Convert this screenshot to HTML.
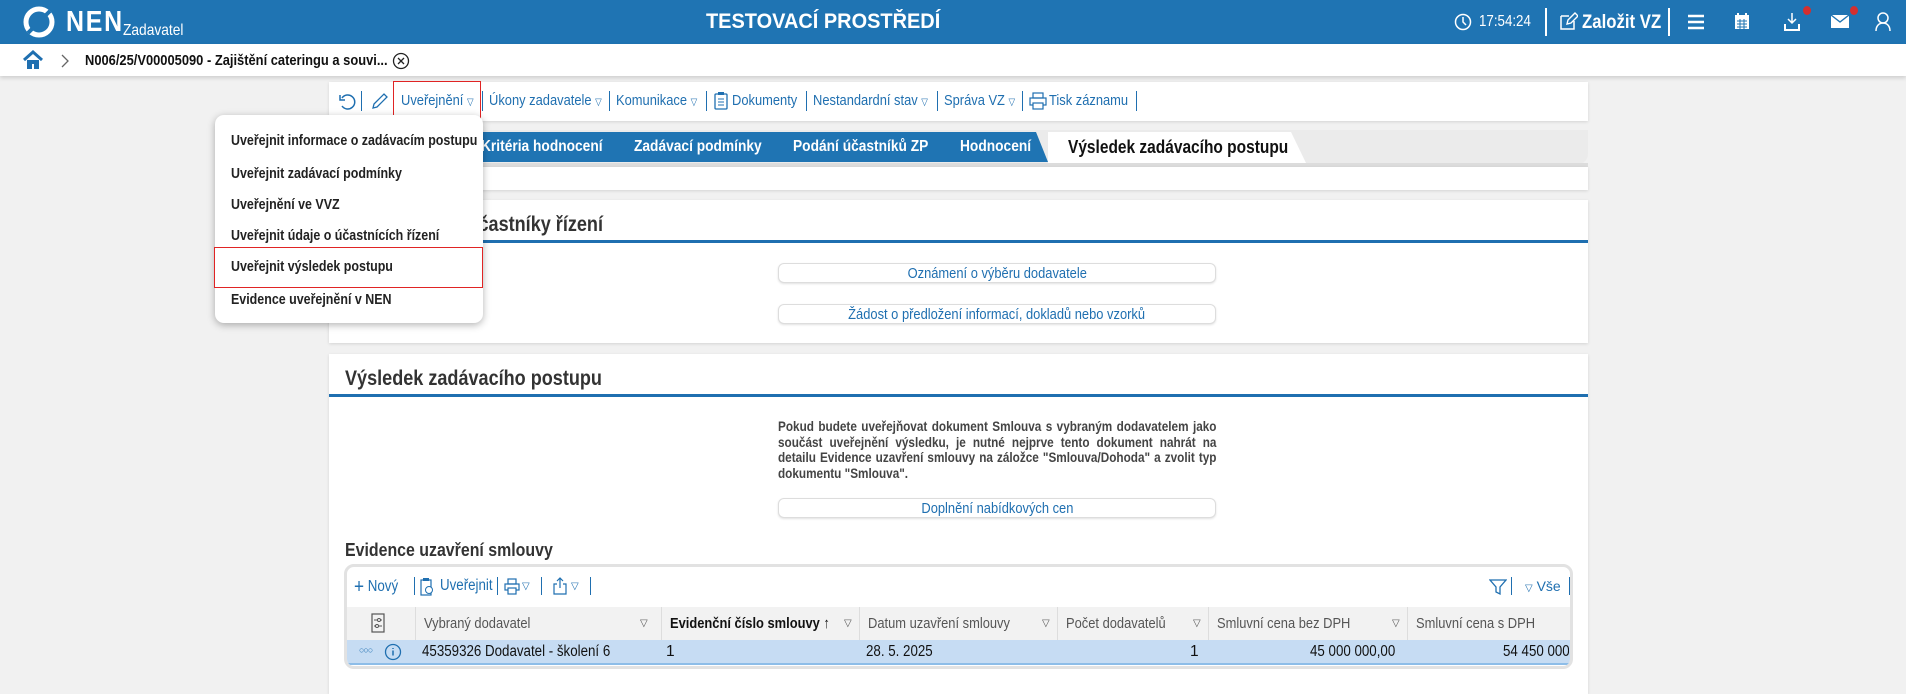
<!DOCTYPE html>
<html><head><meta charset="utf-8">
<style>
*{box-sizing:border-box;margin:0;padding:0}
body{width:1906px;height:680px;overflow:hidden;background:#f1f1f1;font-family:"Liberation Sans",sans-serif;position:relative;color:#222}
.a{position:absolute;white-space:nowrap}
.c{transform:scaleX(.86);transform-origin:0 50%}
.ci{display:inline-block;transform:scaleX(.86);transform-origin:0 50%}
.top{left:0;top:0;width:1906px;height:44px;background:#1f74b3}
.crumb{left:0;top:44px;width:1906px;height:32px;background:#fff;box-shadow:0 2px 4px rgba(0,0,0,.15)}
.tb{color:#1f6fb0;font-size:15px;top:92px}
.sep{width:1px;height:20px;background:#1f6fb0;top:91px}
.tab{top:132px;height:30px;background:#1f74b3;color:#fff;font-weight:bold;font-size:16px;line-height:30px;clip-path:polygon(0 0,calc(100% - 12px) 0,100% 100%,0 100%)}
.panel{background:#fff;box-shadow:0 1px 3px rgba(0,0,0,.12)}
.h2{font-size:21px;font-weight:bold;color:#333}
.bl{height:3px;background:#1f6fb0}
.btn{border:1px solid #ddd;border-radius:6px;background:#fff;box-shadow:0 1px 2px rgba(0,0,0,.12);color:#1f6fb0;font-size:15px;text-align:center;line-height:19px}
.mi{left:231px;font-size:15px;font-weight:bold;color:#222;transform:scaleX(.83);transform-origin:0 50%}
.th{top:607px;height:33px;background:#f2f2f2;border-right:1px solid #ddd;color:#555;font-size:15px;line-height:33px;padding-left:8px}
.td{top:640px;height:24px;font-size:15.5px;line-height:24px;color:#111}
.ar{font-size:10px;color:#555}
</style></head><body>
<div class="a top"></div>
<svg class="a" style="left:22px;top:6px" width="36" height="32" viewBox="0 0 36 32"><circle cx="17" cy="16" r="13" fill="none" stroke="#fff" stroke-width="5"/><path d="M6 27 L28 5" stroke="#1f74b3" stroke-width="4"/></svg>
<div class="a c" style="left:66px;top:6px;color:#fff;font-size:29px;font-weight:bold;letter-spacing:2px">NEN</div>
<div class="a c" style="left:123px;top:22px;color:#fff;font-size:16px">Zadavatel</div>
<div class="a" style="left:706px;top:10px;color:#fff;font-size:21px;font-weight:bold;transform:scaleX(.95);transform-origin:0 50%">TESTOVACÍ PROSTŘEDÍ</div>
<svg class="a" style="left:1454px;top:13px" width="18" height="18"><circle cx="9" cy="9" r="7.5" fill="none" stroke="#fff" stroke-width="1.5"/><path d="M9 4v5l3 3" stroke="#fff" stroke-width="1.5" fill="none"/></svg>
<div class="a c" style="left:1479px;top:13px;color:#fff;font-size:15.5px">17:54:24</div>
<div class="a" style="left:1545px;top:8px;width:2px;height:28px;background:#fff"></div>
<svg class="a" style="left:1558px;top:11px" width="20" height="20"><path d="M3 5h8M3 5v13h13v-8" stroke="#fff" stroke-width="1.5" fill="none"/><path d="M9 13l1-4 7-7 3 3-7 7z" stroke="#fff" stroke-width="1.4" fill="none"/></svg>
<div class="a c" style="left:1582px;top:11px;color:#fff;font-size:19.5px;font-weight:bold">Založit VZ</div>
<div class="a" style="left:1668px;top:8px;width:2px;height:28px;background:#fff"></div>
<svg class="a" style="left:1686px;top:13px" width="20" height="18"><path d="M2 3h16M2 9h16M2 15h16" stroke="#fff" stroke-width="2.4"/></svg>
<svg class="a" style="left:1733px;top:11px" width="18" height="20"><rect x="2" y="4" width="14" height="14" fill="#fff"/><path d="M5 2v4M13 2v4" stroke="#fff" stroke-width="2"/><path d="M4 10h10M4 13h10M4 16h10M7 8v10M11 8v10" stroke="#1f74b3" stroke-width="1"/></svg>
<svg class="a" style="left:1782px;top:11px" width="22" height="22"><path d="M10 2v10M6 8l4 4 4-4" stroke="#fff" stroke-width="1.5" fill="none"/><path d="M3 13v6h14v-6" stroke="#fff" stroke-width="2" fill="none"/></svg>
<div class="a" style="left:1803px;top:6px;width:8px;height:9px;border-radius:50%;background:#d32f2f"></div>
<svg class="a" style="left:1830px;top:14px" width="22" height="16"><rect x="1" y="1" width="18" height="13" fill="#fff"/><path d="M1 1l9 7 9-7" stroke="#1f74b3" stroke-width="1.4" fill="none"/></svg>
<div class="a" style="left:1850px;top:6px;width:8px;height:9px;border-radius:50%;background:#d32f2f"></div>
<svg class="a" style="left:1874px;top:11px" width="18" height="22"><circle cx="9" cy="7" r="5" fill="none" stroke="#fff" stroke-width="1.5"/><path d="M2 20c0-5 3-8 7-8s7 3 7 8" stroke="#fff" stroke-width="1.5" fill="none"/></svg>

<div class="a crumb"></div>
<svg class="a" style="left:22px;top:50px" width="22" height="20"><path d="M2 10L11 2l9 8" stroke="#1f6fb0" stroke-width="3" fill="none"/><path d="M5 10v9h5v-5h2v5h5v-9" fill="#1f6fb0"/></svg>
<svg class="a" style="left:60px;top:54px" width="10" height="14"><path d="M2 1l6 6-6 6" stroke="#666" stroke-width="1.3" fill="none"/></svg>
<div class="a c" style="left:85px;top:52px;font-size:15px;font-weight:bold;color:#111">N006/25/V00005090 - Zajištění cateringu a souvi...</div>
<svg class="a" style="left:392px;top:52px" width="18" height="18"><circle cx="9" cy="9" r="7.5" fill="none" stroke="#222" stroke-width="1.3"/><path d="M6 6l6 6M12 6l-6 6" stroke="#222" stroke-width="1.3"/></svg>

<!-- toolbar -->
<div class="a panel" style="left:329px;top:82px;width:1259px;height:39px"></div>
<svg class="a" style="left:338px;top:92px" width="18" height="20"><path d="M4 6a7 7 0 1 1 0 8" stroke="#1f6fb0" stroke-width="1.5" fill="none"/><path d="M2 3v5h5" stroke="#1f6fb0" stroke-width="1.5" fill="none"/></svg>
<div class="a sep" style="left:361px"></div>
<svg class="a" style="left:369px;top:91px" width="20" height="20"><path d="M4 17l1-4L15 3l3 3L8 16z" stroke="#1f6fb0" stroke-width="1.3" fill="none"/></svg>
<div class="a" style="left:393px;top:81px;width:88px;height:41px;border:1px solid #e02424"></div>
<div class="a tb c" style="left:401px">Uveřejnění <span class="ar" style="color:#1f6fb0">▽</span></div>
<div class="a sep" style="left:482px"></div>
<div class="a tb c" style="left:489px">Úkony zadavatele <span class="ar" style="color:#1f6fb0">▽</span></div>
<div class="a sep" style="left:609px"></div>
<div class="a tb c" style="left:616px">Komunikace <span class="ar" style="color:#1f6fb0">▽</span></div>
<div class="a sep" style="left:706px"></div>
<svg class="a" style="left:713px;top:91px" width="16" height="20"><rect x="2" y="3" width="12" height="15" rx="1" fill="none" stroke="#1f6fb0" stroke-width="1.3"/><rect x="5" y="1" width="6" height="3" fill="#1f6fb0"/><path d="M5 8h6M5 11h6M5 14h6" stroke="#1f6fb0"/></svg>
<div class="a tb c" style="left:732px">Dokumenty</div>
<div class="a sep" style="left:806px"></div>
<div class="a tb c" style="left:813px">Nestandardní stav <span class="ar" style="color:#1f6fb0">▽</span></div>
<div class="a sep" style="left:937px"></div>
<div class="a tb c" style="left:944px">Správa VZ <span class="ar" style="color:#1f6fb0">▽</span></div>
<div class="a sep" style="left:1022px"></div>
<svg class="a" style="left:1029px;top:92px" width="18" height="18"><rect x="4" y="1" width="10" height="5" fill="none" stroke="#1f6fb0" stroke-width="1.2"/><rect x="1" y="6" width="16" height="7" fill="none" stroke="#1f6fb0" stroke-width="1.2"/><rect x="4" y="11" width="10" height="6" fill="#fff" stroke="#1f6fb0" stroke-width="1.2"/></svg>
<div class="a tb c" style="left:1049px">Tisk záznamu</div>
<div class="a sep" style="left:1136px"></div>

<!-- tabs -->
<div class="a" style="left:329px;top:130px;width:1259px;height:34px;background:#ebebeb;border-radius:0 0 10px 0"></div>
<div class="a tab" style="left:460px;width:166px;padding-left:21px"><span class="ci">Kritéria hodnocení</span></div>
<div class="a tab" style="left:614px;width:172px;padding-left:20px"><span class="ci">Zadávací podmínky</span></div>
<div class="a tab" style="left:774px;width:166px;padding-left:19px"><span class="ci">Podání účastníků ZP</span></div>
<div class="a tab" style="left:928px;width:120px;padding-left:32px"><span class="ci">Hodnocení</span></div>
<div class="a" style="left:1048px;top:132px;width:258px;height:31px;background:#fff;clip-path:polygon(0 0,243px 0,100% 100%,0 100%);font-weight:bold;font-size:18px;line-height:30px;padding-left:20px;color:#111"><span class="ci">Výsledek zadávacího postupu</span></div>
<div class="a" style="left:329px;top:163px;width:1259px;height:4px;background:#dcdcdc"></div>
<div class="a panel" style="left:329px;top:167px;width:1259px;height:23px"></div>

<!-- section 1 -->
<div class="a panel" style="left:329px;top:200px;width:1259px;height:143px"></div>
<div class="a h2" style="left:340px;top:213px;transform:scaleX(.86);transform-origin:0 50%">Komunikace s účastníky řízení</div>
<div class="a bl" style="left:329px;top:240px;width:1259px"></div>
<div class="a btn" style="left:778px;top:263px;width:438px;height:20px"><span class="ci" style="transform-origin:50% 50%">Oznámení o výběru dodavatele</span></div>
<div class="a btn" style="left:778px;top:304px;width:438px;height:20px"><span class="ci" style="transform-origin:50% 50%">Žádost o předložení informací, dokladů nebo vzorků</span></div>

<!-- section 2 -->
<div class="a panel" style="left:329px;top:354px;width:1259px;height:340px"></div>
<div class="a h2" style="left:345px;top:367px;transform:scaleX(.86);transform-origin:0 50%">Výsledek zadávacího postupu</div>
<div class="a bl" style="left:329px;top:394px;width:1259px"></div>
<div class="a" style="left:778px;top:419px;width:522px;white-space:normal;font-size:14px;line-height:15.5px;text-align:justify;color:#444;font-weight:bold;transform:scaleX(.84);transform-origin:0 0">Pokud budete uveřejňovat dokument Smlouva s vybraným dodavatelem jako součást uveřejnění výsledku, je nutné nejprve tento dokument nahrát na detailu Evidence uzavření smlouvy na záložce "Smlouva/Dohoda" a zvolit typ dokumentu "Smlouva".</div>
<div class="a btn" style="left:778px;top:498px;width:438px;height:20px"><span class="ci" style="transform-origin:50% 50%">Doplnění nabídkových cen</span></div>
<div class="a c" style="left:345px;top:539px;font-size:18.5px;font-weight:bold;color:#333">Evidence uzavření smlouvy</div>

<!-- table -->
<div class="a" style="left:344px;top:564px;width:1229px;height:105px;border:3px solid #e2e2e2;border-radius:10px;background:#fff;overflow:hidden">
 <div style="position:absolute;left:0;top:40px;width:1240px;height:58px">
  <div class="a th" style="left:0;top:0;width:69px"></div>
  <div class="a th" style="left:69px;top:0;width:246px"><span class="ci">Vybraný dodavatel</span><span class="a ar" style="left:224px">▽</span></div>
  <div class="a th" style="left:315px;top:0;width:198px;color:#111;font-weight:bold"><span class="ci">Evidenční číslo smlouvy <span style="font-weight:normal">↑</span></span><span class="a ar" style="left:182px;font-weight:normal">▽</span></div>
  <div class="a th" style="left:513px;top:0;width:198px"><span class="ci">Datum uzavření smlouvy</span><span class="a ar" style="left:182px">▽</span></div>
  <div class="a th" style="left:711px;top:0;width:151px"><span class="ci">Počet dodavatelů</span><span class="a ar" style="left:135px">▽</span></div>
  <div class="a th" style="left:862px;top:0;width:199px"><span class="ci">Smluvní cena bez DPH</span><span class="a ar" style="left:183px">▽</span></div>
  <div class="a th" style="left:1061px;top:0;width:180px"><span class="ci">Smluvní cena s DPH</span></div>
  <div class="a" style="left:0;top:33px;width:1240px;height:25px;background:#c6dcf3;border-bottom:2px solid #8dbde8"></div>
 </div>
</div>
<svg class="a" style="left:371px;top:613px" width="14" height="20"><rect x="1" y="1" width="12" height="18" fill="none" stroke="#555" stroke-width="1.2"/><path d="M3 7h8M3 13h8" stroke="#555"/><circle cx="8" cy="7" r="1.5" fill="#fff" stroke="#555"/><circle cx="6" cy="13" r="1.5" fill="#fff" stroke="#555"/></svg>
<div class="a c" style="left:354px;top:576px;color:#1f6fb0;font-size:15.5px"><span style="font-size:20px;vertical-align:-2px">+</span> Nový</div>
<div class="a" style="left:414px;top:577px;width:1px;height:18px;background:#1f6fb0"></div>
<svg class="a" style="left:420px;top:577px" width="14" height="20"><rect x="1" y="3" width="10" height="15" fill="none" stroke="#1f6fb0" stroke-width="1.2"/><rect x="3" y="1" width="6" height="3" fill="#1f6fb0"/><circle cx="9" cy="13" r="3.5" fill="#fff" stroke="#1f6fb0"/></svg>
<div class="a c" style="left:440px;top:577px;color:#1f6fb0;font-size:15.5px">Uveřejnit</div>
<div class="a" style="left:497px;top:577px;width:1px;height:18px;background:#1f6fb0"></div>
<svg class="a" style="left:504px;top:578px" width="16" height="18"><rect x="4" y="1" width="8" height="5" fill="none" stroke="#1f6fb0" stroke-width="1.2"/><rect x="1" y="6" width="14" height="6" fill="none" stroke="#1f6fb0" stroke-width="1.2"/><rect x="4" y="10" width="8" height="6" fill="#fff" stroke="#1f6fb0" stroke-width="1.2"/></svg>
<div class="a ar" style="left:522px;top:581px;color:#1f6fb0">▽</div>
<div class="a" style="left:541px;top:577px;width:1px;height:18px;background:#1f6fb0"></div>
<svg class="a" style="left:552px;top:576px" width="16" height="20"><path d="M5 8H2v10h12V8h-3M8 12V2M5 5l3-3 3 3" stroke="#1f6fb0" stroke-width="1.2" fill="none"/></svg>
<div class="a ar" style="left:571px;top:581px;color:#1f6fb0">▽</div>
<div class="a" style="left:590px;top:577px;width:1px;height:18px;background:#1f6fb0"></div>
<svg class="a" style="left:1489px;top:578px" width="18" height="18"><path d="M1 2h16l-6 7v7l-4-2V9z" fill="none" stroke="#1f6fb0" stroke-width="1.3"/></svg>
<div class="a" style="left:1511px;top:577px;width:1px;height:18px;background:#1f6fb0"></div>
<div class="a" style="left:1525px;top:578px;color:#1f6fb0;font-size:14px"><span class="ar" style="color:#1f6fb0">▽</span> Vše</div>
<div class="a" style="left:1569px;top:577px;width:1px;height:18px;background:#1f6fb0"></div>
<div class="a" style="left:359px;top:645px;color:#1f6fb0;font-size:9px;letter-spacing:-1px">○○○</div>
<svg class="a" style="left:384px;top:643px" width="18" height="18"><circle cx="9" cy="9" r="7.5" fill="none" stroke="#1f6fb0" stroke-width="1.3"/><path d="M9 7.5v5M9 5v1" stroke="#1f6fb0" stroke-width="1.5"/></svg>
<div class="a td c" style="left:422px">45359326 Dodavatel - školení 6</div>
<div class="a td" style="left:666px">1</div>
<div class="a td c" style="left:866px">28. 5. 2025</div>
<div class="a td" style="left:1190px">1</div>
<div class="a td c" style="left:1310px">45 000 000,00</div>
<div class="a td" style="left:1503px;width:66px;overflow:hidden"><span class="ci">54 450 000,00</span></div>

<!-- dropdown -->
<div class="a" style="left:215px;top:115px;width:268px;height:208px;background:#fff;border-radius:9px;box-shadow:0 2px 8px rgba(0,0,0,.3)"></div>
<div class="a mi" style="top:132px">Uveřejnit informace o zadávacím postupu</div>
<div class="a mi" style="top:165px">Uveřejnit zadávací podmínky</div>
<div class="a mi" style="top:196px">Uveřejnění ve VVZ</div>
<div class="a mi" style="top:227px">Uveřejnit údaje o účastnících řízení</div>
<div class="a" style="left:214px;top:247px;width:269px;height:41px;border:1px solid #e02424"></div>
<div class="a mi" style="top:258px">Uveřejnit výsledek postupu</div>
<div class="a mi" style="top:291px">Evidence uveřejnění v NEN</div>
</body></html>
